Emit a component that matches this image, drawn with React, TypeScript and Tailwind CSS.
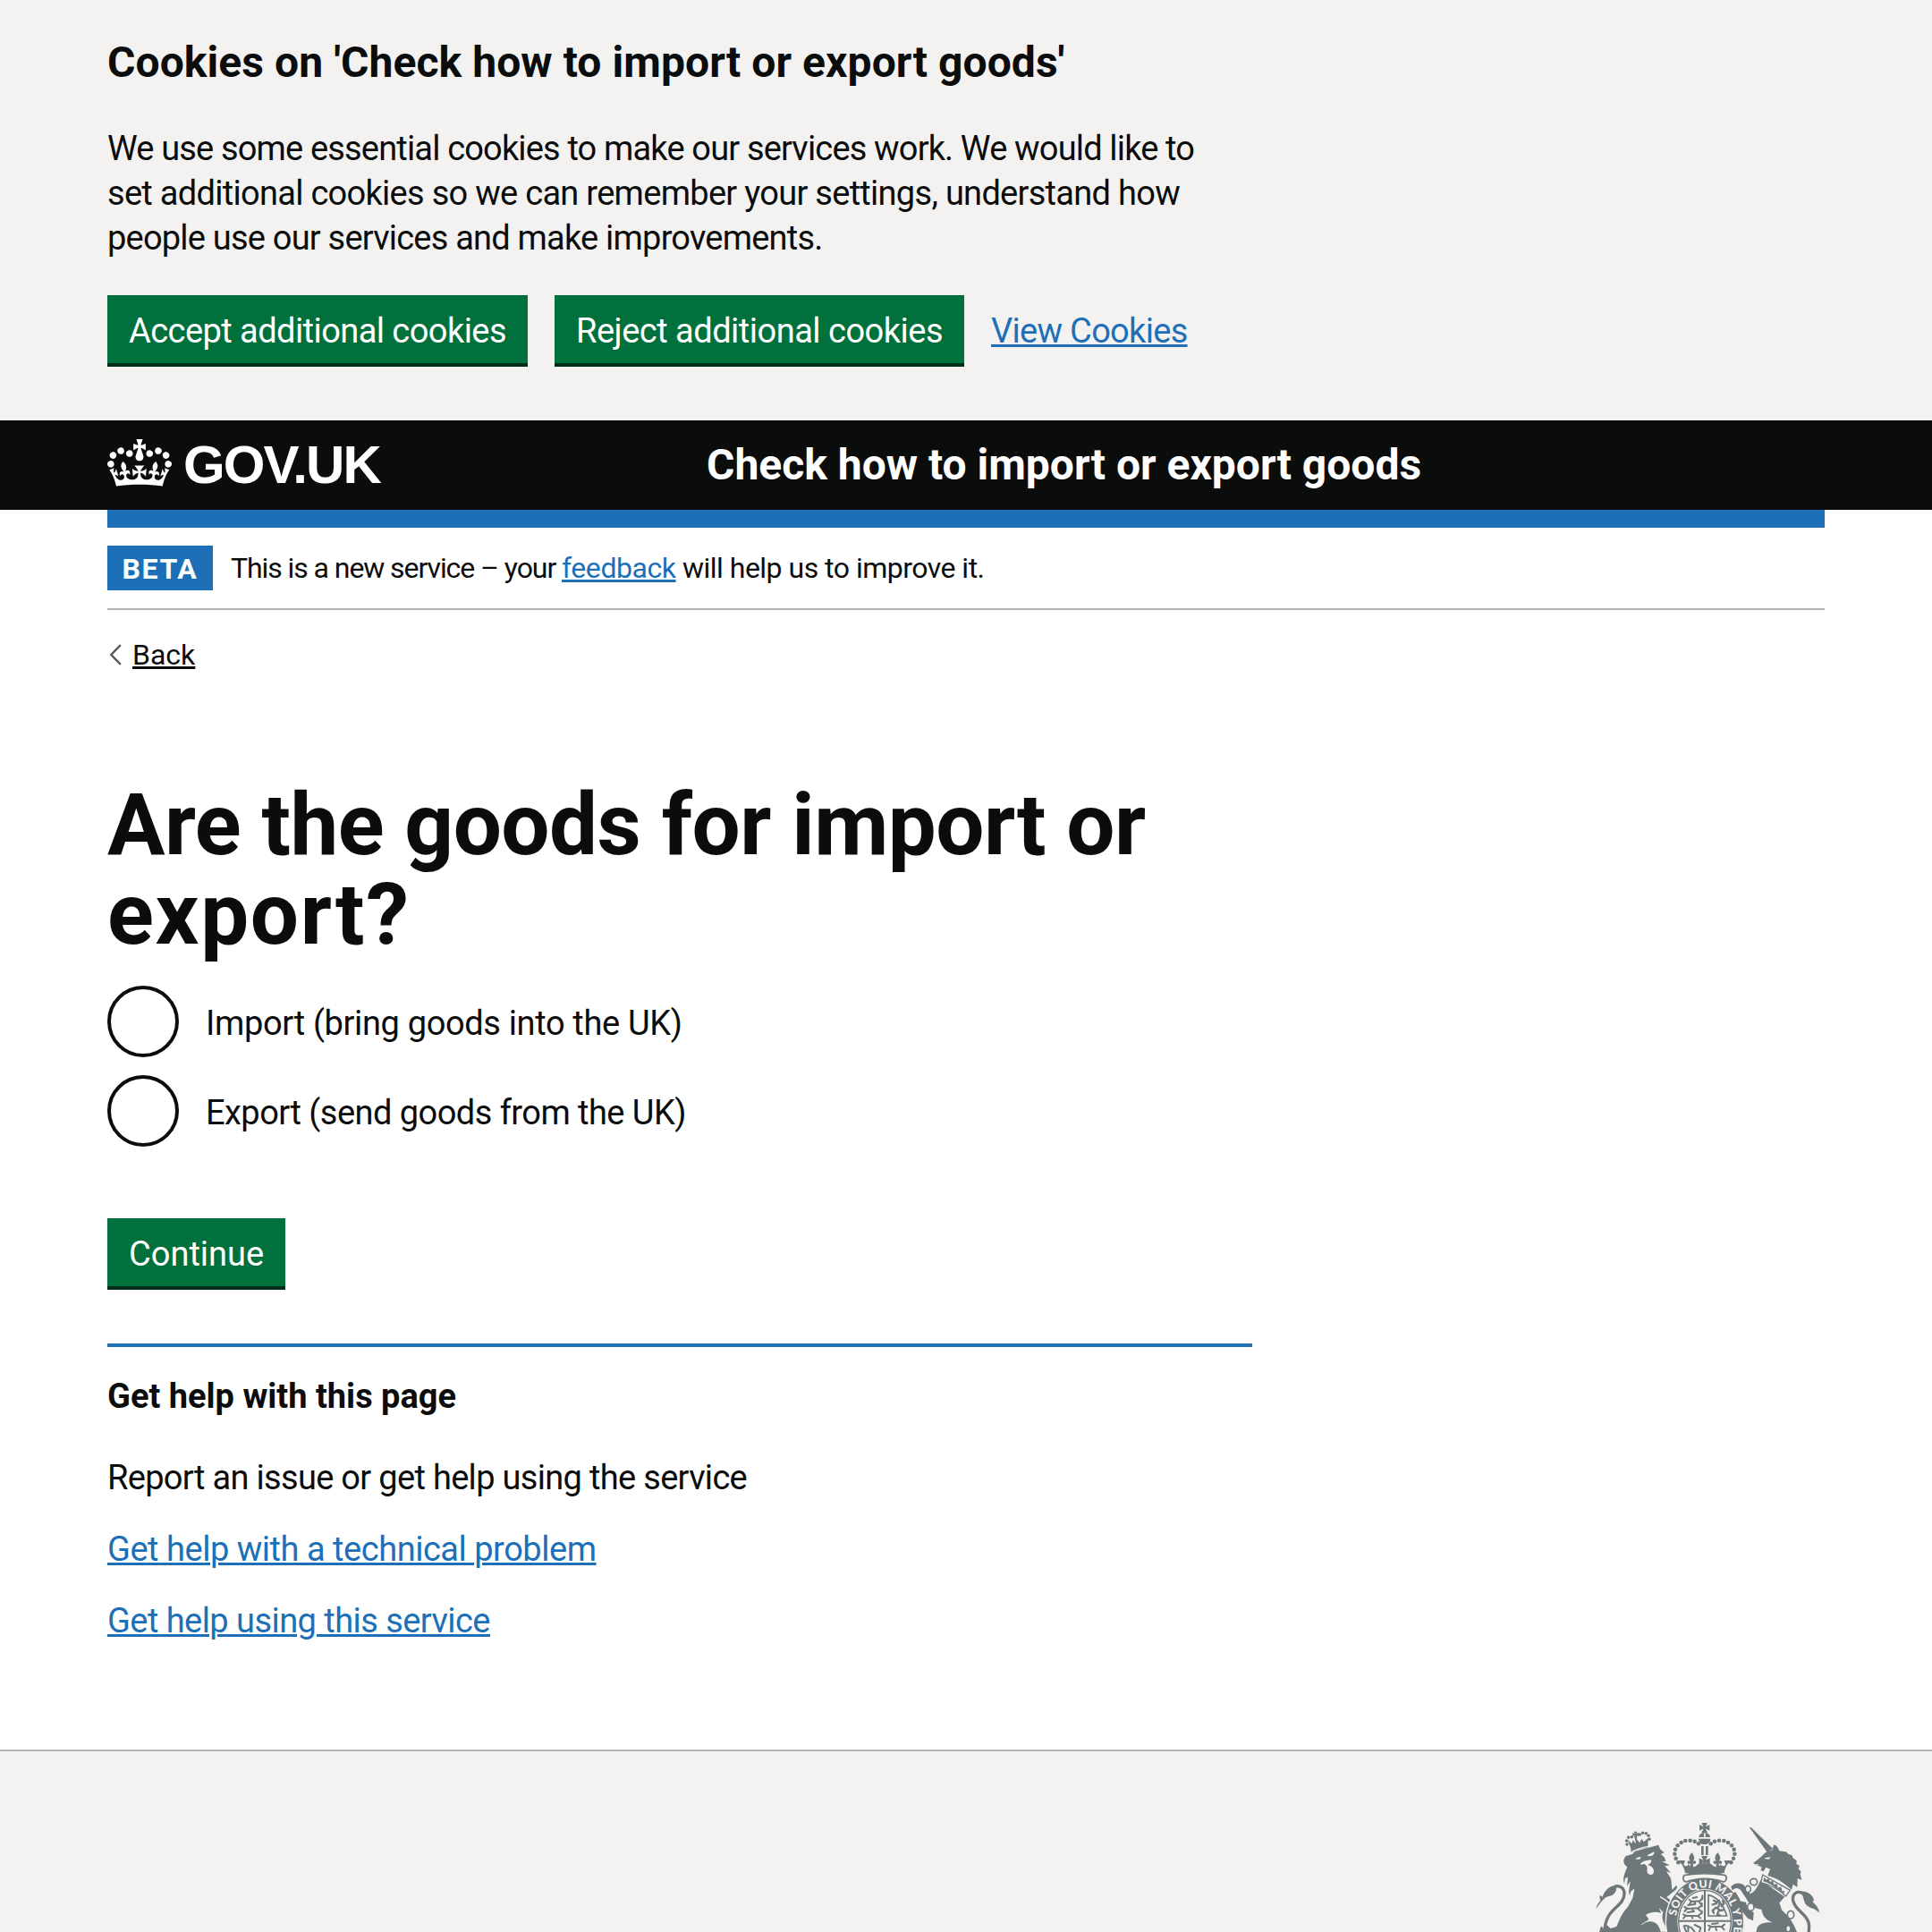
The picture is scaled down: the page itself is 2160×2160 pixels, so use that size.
import type { ReactNode } from 'react';

const CROWN_PATH =
  'M25 30.2c3.5 1.5 7.7-.2 9.1-3.7 1.5-3.6-.2-7.8-3.9-9.2-3.6-1.4-7.6.3-9.1 3.9-1.4 3.5.3 7.5 3.9 9zM9 39.5c3.6 1.5 7.8-.2 9.2-3.7 1.5-3.6-.2-7.8-3.9-9.1-3.6-1.5-7.6.2-9.1 3.8-1.4 3.5.3 7.5 3.8 9zM4.4 57.2c3.5 1.5 7.7-.2 9.1-3.8 1.5-3.6-.2-7.7-3.9-9.1-3.5-1.5-7.6.3-9.1 3.8-1.4 3.5.3 7.6 3.9 9.1zm38.3-21.4c3.5 1.5 7.7-.2 9.1-3.8 1.5-3.6-.2-7.7-3.9-9.1-3.6-1.5-7.6.3-9.1 3.8-1.3 3.6.4 7.7 3.9 9.1zm64.4-5.6c-3.6 1.5-7.8-.2-9.1-3.7-1.5-3.6.2-7.8 3.8-9.2 3.6-1.4 7.7.3 9.2 3.9 1.3 3.5-.4 7.5-3.9 9zm15.9 9.3c-3.6 1.5-7.7-.2-9.1-3.7-1.5-3.6.2-7.8 3.7-9.1 3.6-1.5 7.7.2 9.2 3.8 1.5 3.5-.3 7.5-3.8 9zm4.7 17.7c-3.6 1.5-7.8-.2-9.2-3.8-1.5-3.6.2-7.7 3.9-9.1 3.6-1.5 7.7.3 9.2 3.8 1.3 3.5-.4 7.6-3.9 9.1zM89.3 35.8c-3.6 1.5-7.8-.2-9.2-3.8-1.4-3.6.2-7.7 3.9-9.1 3.6-1.5 7.7.3 9.2 3.8 1.4 3.6-.3 7.7-3.9 9.1zM69.7 17.7l8.9 4.7V9.3l-8.9 2.8c-.2-.3-.5-.6-.9-.9L72.4 0H59.6l3.5 11.2c-.3.3-.6.5-.9.9l-8.8-2.8v13.1l8.8-4.7c.3.3.6.7.9.9l-5 15.4v.1c-.2.8-.4 1.6-.4 2.4 0 4.1 3.1 7.5 7 8.1h.2c.3 0 .7.1 1 .1.4 0 .7 0 1-.1h.2c4-.6 7.1-4.1 7.1-8.1 0-.8-.1-1.7-.4-2.4V34l-5.1-15.4c.4-.2.7-.6 1-.9zM66 92.8c16.9 0 32.8 1.1 47.1 3.2 4-16.9 8.9-26.7 14-33.5l-9.6-3.4c1 4.9 1.1 7.2 0 10.2-1.5-1.4-3-4.3-4.2-8.7L108.6 76c2.8-2 5-3.2 7.5-3.3-4.4 9.4-10 11.9-13.6 11.2-4.3-.8-6.3-4.6-5.6-7.9 1-4.7 5.7-5.9 8-.5 4.3-8.7-3-11.4-7.6-8.8 7.1-7.2 7.9-13.5 2.1-21.1-8 6.1-8.1 12.3-4.5 20.8-4.7-5.4-12.1-2.5-9.5 6.2 3.4-5.2 7.9-2 7.2 3.1-.6 4.3-6.4 7.8-13.5 7.2-10.3-.9-10.9-8-11.2-13.8 2.5-.5 7.1 1.8 11 7.3L80.2 60c-4.1 4.4-8 5.3-12.3 5.4 1.4-4.4 8-11.6 8-11.6H55.5s6.4 7.2 7.9 11.6c-4.2-.1-8-1-12.3-5.4l1.4 16.4c3.9-5.5 8.5-7.7 10.9-7.3-.3 5.8-.9 12.8-11.1 13.8-7.2.6-12.9-2.9-13.5-7.2-.7-5 3.8-8.3 7.1-3.1 2.7-8.7-4.6-11.6-9.4-6.2 3.7-8.5 3.6-14.7-4.6-20.8-5.8 7.6-5 13.9 2.2 21.1-4.7-2.6-11.9.1-7.7 8.8 2.3-5.5 7.1-4.2 8.1.5.7 3.3-1.3 7.1-5.7 7.9-3.5.7-9-1.8-13.5-11.2 2.5.1 4.7 1.3 7.5 3.3l-4.7-15.4c-1.2 4.4-2.7 7.2-4.3 8.7-1.1-3-.9-5.3 0-10.2l-9.5 3.4c5 6.9 9.9 16.7 14 33.5 14.8-2.1 30.8-3.2 47.7-3.2z';

const INK = '#6e7779';
const PAPER = '#f3f2f1';

const ARCH_DOTS: [number, number][] = [
  [417, 124], [404, 116], [389, 113], [373, 114], [359, 120], [347, 130], [339, 143], [337, 158], [341, 173], [349, 187],
];

function CrossPatee({ x, y, r }: { x: number; y: number; r: number }) {
  return (
    <path
      transform={`translate(${x} ${y}) scale(${r})`}
      d="M-.6-1H.6L.2-.2 1-.6V.6L.2.2.6 1H-.6L-.2.2-1 .6V-.6L-.2-.2Z"
    />
  );
}

/** One side of the imperial crown; the other side is its mirror image. */
function CrownHalf() {
  return (
    <g>
      {ARCH_DOTS.map(([cx, cy]) => (
        <circle key={`${cx}-${cy}`} cx={cx} cy={cy} r={6.8} />
      ))}
      <path d="M394 154c9 11 12 19 4 29 6-5 12-2 10 5-2 5-8 5-10 1l2 14h-12l2-14c-2 4-8 4-10-1-2-7 4-10 10-5-8-10-5-18 4-29Z" />
      <path d="M348 180l24 0-5 14c6 8 14 6 16-2 5 12 18 14 30 2l10-6 15 4v38c-26 0-46-3-66-8-3-18-8-26-16-34Z" />
    </g>
  );
}

function RoyalArms() {
  return (
    <svg viewBox="60 54 780 366" width={260} height={122} fill={INK} className="block">
      {/* lion tail */}
      <path d="M74 343c1-14 8-21 14-29-3-7-4-13-1-17l8 5c6-20 22-36 42-38 8 8 4 22-6 30-12 9-20 3-32 16-8 9-17 18-25 33Z" />
      <path d="M134 268c20-6 34 4 34 24 0 30-32 44-50 70-10 15-16 33-17 62" fill="none" stroke={INK} strokeWidth={10} />
      {/* lion body */}
      <path d="M172 166l24-8 6-8 81-22 5 14 14 12-12 5 12 10 5 13-12 2 25 12-16 3 20 22-15-4 13 20c6 10 3 26 7 42l12-14c7-2 4 10-1 14l-30 24c16 12 31 24 38 46l4 40-6 31H84l6-20 8 8 12-11 12 11 20-6c14-32 16-42 38-66l16-30 6-32-12 10-4 14-3-14 5-34-11 16 3-30-9 4-3 17c-6-15-1-30 10-55-9-5-13-12-12-24Z" />
      <path d="M240 362c17-11 38-11 52-5l-8-18 14 14c-6 20 0 30 7 46l12 20h-56c-6-12-14-22-38-24 10-6 24-14 27-18Z" fill={PAPER} />
      <path d="M250 385c22-2 34 10 40 35h-86c10-14 26-30 46-35Z" />
      <path d="M302 364l10 12 2-14 10 16 6-14 8 20-4 24-16 6-14-18Z" />
      <path d="M288 302c30 15 44 34 50 70" fill="none" stroke={PAPER} strokeWidth={4} />
      <path d="M204 174l18-7c4 7-5 13-18 7Zm40-11l24-12c2 12-12 19-24 12Z" fill={PAPER} />
      <path d="M222 190l12-8 20-4c7 0 5 8 0 12l-8 6c15 2 22 12 21 22-2 13-18 13-22 2-2-7 2-14-2-22l-8-7-11 4Z" fill={PAPER} />
      {/* lion crown */}
      <g>
        <path d="M190 140l-11-30 14 14 4-12 9 12 6-14 7 11 8-14 6 11 15-14-1 34c-18 1-40 6-57 16Z" />
        <CrossPatee x={206} y={93} r={10} />
        <path d="M202 99l6-2 6 30-6 2Z" />
        {[[177, 126], [176, 114], [182, 103], [193, 101], [220, 93], [230, 88], [241, 89], [249, 97], [252, 109]].map(([cx, cy]) => (
          <circle key={`${cx}-${cy}`} cx={cx} cy={cy} r={5.2} />
        ))}
        <path d="M190 153c20-12 40-18 64-20" fill="none" stroke={PAPER} strokeWidth={4} />
      </g>
      {/* garter */}
      <ellipse cx={438} cy={385} rx={131} ry={146} stroke={PAPER} strokeWidth={4} />
      <ellipse cx={438} cy={385} rx={92} ry={110} fill={PAPER} />
      <ellipse cx={438} cy={385} rx={88} ry={105} fill="none" stroke={INK} strokeWidth={4} />
      <path id="garter-line" d="M341 440A97 116 0 0 1 341 385A97 114 0 0 1 535 385A97 116 0 0 1 529 440" fill="none" />
      <text fill={PAPER} className="font-['Lato'] text-[37px] font-black">
        <textPath href="#garter-line" startOffset={74} textLength={350}>
          SOIT QUI MAL Y PE
        </textPath>
      </text>
      {/* shield quarters */}
      <path d="M435 280h6v140h-6zM351 380h175v6H351z" />
      <g fill="none" stroke={INK} strokeWidth={6} strokeLinecap="round">
        <path d="M386 312l10 6 26-2 6-8M392 318l-6 10M404 318l2 9M418 317l6 9M430 310v-12M398 306l14-3" />
        <path d="M370 336l12 6 34-2 10-8M378 342l-8 9M396 342l3 9M414 341l9 8M428 334v-10M382 330l20-3" />
        <path d="M366 361l12 5 38-1 10-8M374 366l-8 8M394 366l3 8M414 366l9 7M428 358v-8M380 354l22-3" />
        <path d="M450 296c28 6 48 26 62 70h-62Z" strokeWidth={5} />
        <path d="M468 314l10 6 8-4 2 12-8 12 10 8 10-2M478 324l-14 4M476 338l-12 10 4 8M484 350l-4 12 8 2M494 334l8-10-4-8" strokeWidth={7} />
        <path d="M372 398l22 8 10 14M368 400l8 20M382 400v20M404 396l20 10-4 14" />
        <path d="M450 398l12 5 34-2 8-6M456 404l-4 10M474 404l3 10M494 402l9 10M462 393l20-2" />
      </g>
      {/* imperial crown */}
      <CrossPatee x={437} y={70} r={17} />
      <path d="M418 102a19 16 0 0 1 38 0ZM417 107h40c-1 12-9 19-20 19s-19-7-20-19Z" />
      <path d="M435 88h5v15h-5z" fill={PAPER} />
      <path d="M426 132h8v30h-8zM441 132h8v30h-8z" />
      <CrownHalf />
      <g transform="matrix(-1 0 0 1 875 0)">
        <CrownHalf />
      </g>
      <CrossPatee x={437} y={183} r={18} />
      <path d="M372 229c42-7 88-7 132 0 10 4 8 20-3 23-42-14-86-14-126 0-11-3-13-19-3-23Z" fill={PAPER} stroke={INK} strokeWidth={5} />
      {/* unicorn */}
      <path d="M587 68l7 2 72 70-18 14Z" />
      <path d="M600 189l24-19 18-17 22-8 6-18c9 3 14 10 18 21l22 3 10 9 10 2 4 10 12 8-1 12 11 6-4 10 9 10-3 8 5 20-14-6-1 30-14-10-5 18c-26-22-46-38-80-47l8-22-14-6-8 14-10-4 4-10-10-4Z" />
      <path d="M638 172l20-3c-2 8-12 10-20 3Z" fill={PAPER} />
      <path d="M604 198l14-5M610 208l12-8" fill="none" stroke={PAPER} strokeWidth={3} />
      <path d="M626 246l80 56-18 20 8 24 26 26 14 24 12 26H610l4-18c12-16 32-16 52-16-22-8-34-20-38-44-24-2-40-14-52-38l-10-14c-10-20-20-24-36-12l-4-12c10-14 34-16 46-2l18 26c14-4 24-20 36-48Z" />
      <path d="M554 316l22 4 6 26 20 8-2 28-18-8-26-32-6-16Z" />
      <path d="M536 288l14 22 10 34" fill="none" stroke={INK} strokeWidth={10} />
      <path d="M632 228l92 52-14 20c-24-24-50-38-84-46Z" fill={PAPER} stroke={INK} strokeWidth={4} />
      <path d="M634 250l3-14 8 9 8-6 3 13 10-4 4 13 10-3 3 14 11-4 3 15 8-1-2 10c-20-18-44-34-69-42Z" />
      <g fill="none" stroke={INK} strokeWidth={5}>
        <ellipse cx={602} cy={252} rx={12} ry={11} fill={PAPER} />
        <ellipse cx={583} cy={276} rx={9} ry={11} fill={PAPER} />
        <ellipse cx={592} cy={336} rx={11} ry={13} fill={PAPER} />
        <ellipse cx={726} cy={362} rx={11} ry={13} fill={PAPER} />
        <ellipse cx={718} cy={409} rx={8} ry={11} fill={PAPER} />
      </g>
      {/* unicorn tail */}
      <path d="M768 292c-20-14-38 0-34 22 6 34 42 42 52 74 3 12 2 22 0 36" fill="none" stroke={INK} strokeWidth={10} />
      <path d="M758 284c20-4 42 10 46 28l-4 8c8 6 20 16 22 36-14-18-34-14-46-30-8-12-6-28-18-42Z" />
    </svg>
  );
}

function Button({ children }: { children: ReactNode }) {
  return (
    <button className="block h-[76px] bg-[#00703c] px-6 pt-[3px] text-[38px] leading-[38px] text-white shadow-[0_4px_0_#002d18]">
      {children}
    </button>
  );
}

function Radio({ children }: { children: ReactNode }) {
  return (
    <label className="flex h-20 items-center">
      <span className="size-20 rounded-full border-4 border-[#0b0c0c] bg-white" />
      <span className="pt-[4px] pl-[30px] leading-[50px]">{children}</span>
    </label>
  );
}

const LINK = 'text-[#1d70b8] underline decoration-[3px] underline-offset-[2px]';

export default function App() {
  return (
    <div className="h-[2160px] w-[2160px] overflow-hidden bg-white font-['Roboto',sans-serif] text-[38px] leading-[50px] text-[#0b0c0c]">
      <section className="h-[470px] bg-[#f3f2f1] px-[120px] pt-10">
        <h2 className="text-[48px] leading-[60px] font-bold tracking-[0.0015em]">
          Cookies on 'Check how to import or export goods'
        </h2>
        <p className="mt-[41px] whitespace-nowrap">
          <span className="block tracking-[-0.022em]">
            We use some essential cookies to make our services work. We would like to
          </span>
          <span className="block tracking-[-0.0187em]">
            set additional cookies so we can remember your settings, understand how
          </span>
          <span className="block tracking-[-0.0207em]">people use our services and make improvements.</span>
        </p>
        <div className="mt-[39px] flex gap-[30px]">
          <Button>
            <span className="tracking-[-0.0146em]">Accept additional cookies</span>
          </Button>
          <Button>
            <span className="tracking-[-0.0131em]">Reject additional cookies</span>
          </Button>
          <a className={`${LINK} mt-[15px] tracking-[-0.0184em]`}>View Cookies</a>
        </div>
      </section>

      <header className="h-[100px] bg-[#0b0c0c] px-[120px] text-white">
        <div className="flex">
          <div className="flex w-[670px] pt-[21px]">
            <svg viewBox="0 0 132 97" width={72} height={53} fill="currentColor">
              <path d={CROWN_PATH} />
            </svg>
            <span className="ml-[13px] pt-[2px] font-['Liberation_Sans',sans-serif] text-[60px] leading-[54px] font-bold tracking-[-0.031em]">
              GOV.UK
            </span>
          </div>
          <span className="pt-5 text-[48px] leading-[60px] font-bold">Check how to import or export goods</span>
        </div>
      </header>

      <div className="px-[120px]">
        <div className="h-5 bg-[#1d70b8]" />
        <div className="mt-5 flex border-b-2 border-[#b1b4b6] pb-5 text-[32px]">
          <strong className="mr-5 h-[50px] w-[118px] bg-[#1d70b8] pt-px text-center font-bold tracking-[0.05em] text-white">
            BETA
          </strong>
          <span className="whitespace-pre">
            <span className="tracking-[-0.0336em]">This is a new service – your </span>
            <a className={`${LINK} tracking-[-0.014em]`}>feedback</a>
            <span className="tracking-[-0.0159em]"> will help us to improve it.</span>
          </span>
        </div>

        <a className="mt-[30px] flex h-10 items-center text-[32px] leading-10">
          <svg viewBox="0 0 28 40" width={28} height={40} fill="none" stroke="#505a5f" strokeWidth={2.4}>
            <path d="M14.8 9.2L4.3 20l10.5 10.8" />
          </svg>
          <span className="underline decoration-[3px] underline-offset-[2px]">Back</span>
        </a>

        <main className="mt-[120px] w-[1280px]">
          <h1 className="text-[96px] leading-[100px] font-bold whitespace-nowrap">
            <span className="block tracking-[-0.0053em]">Are the goods for import or</span>
            <span className="block tracking-[0.018em]">export?</span>
          </h1>
          <div className="mt-[30px] flex flex-col gap-5">
            <Radio>
              <span className="tracking-[-0.0092em]">Import (bring goods into the UK)</span>
            </Radio>
            <Radio>
              <span className="tracking-[-0.0142em]">Export (send goods from the UK)</span>
            </Radio>
          </div>
          <div className="mt-20 flex">
            <Button>Continue</Button>
          </div>
          <div className="mt-16 border-t-4 border-[#1d70b8] pt-[30px]">
            <h2 className="font-bold">Get help with this page</h2>
            <p className="mt-[41px] tracking-[-0.018em]">Report an issue or get help using the service</p>
            <p className="mt-[30px]">
              <a className={`${LINK} tracking-[-0.0124em]`}>Get help with a technical problem</a>
            </p>
            <p className="mt-[30px]">
              <a className={`${LINK} tracking-[-0.0145em]`}>Get help using this service</a>
            </p>
          </div>
        </main>
      </div>

      <footer className="mt-[119px] flex h-[204px] justify-end border-t-2 border-[#b1b4b6] bg-[#f3f2f1] px-[120px] pt-20">
        <RoyalArms />
      </footer>
    </div>
  );
}
